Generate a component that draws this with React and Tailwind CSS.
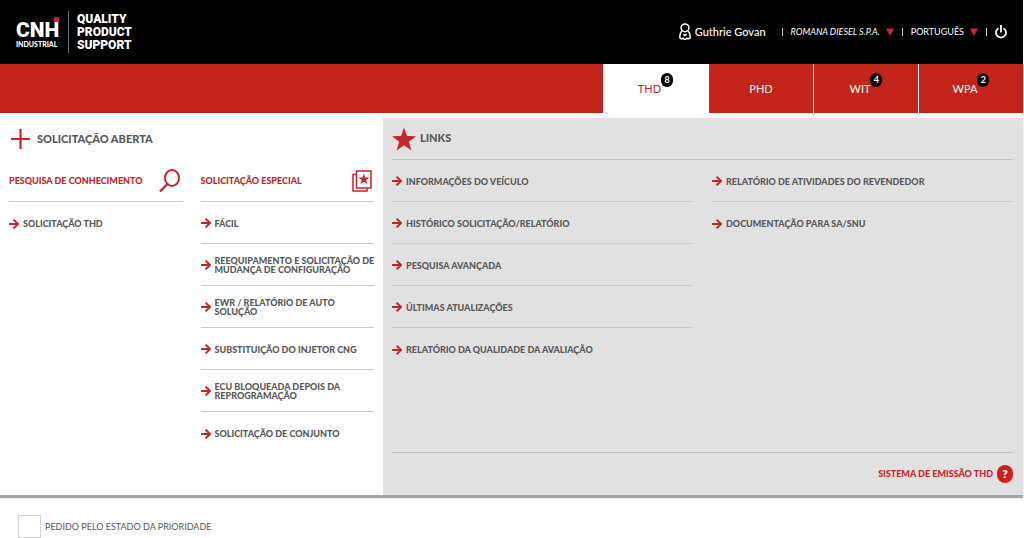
const tabs = [
  { label: "THD", count: 8, active: true },
  { label: "PHD" },
  { label: "WIT", count: 4 },
  { label: "WPA", count: 2 },
];

const specialRequests = [
  "FÁCIL",
  "REEQUIPAMENTO E SOLICITAÇÃO DE\nMUDANÇA DE CONFIGURAÇÃO",
  "EWR / RELATÓRIO DE AUTO\nSOLUÇÃO",
  "SUBSTITUIÇÃO DO INJETOR CNG",
  "ECU BLOQUEADA DEPOIS DA\nREPROGRAMAÇÃO",
  "SOLICITAÇÃO DE CONJUNTO",
];

const mainLinks = [
  "INFORMAÇÕES DO VEÍCULO",
  "HISTÓRICO SOLICITAÇÃO/RELATÓRIO",
  "PESQUISA AVANÇADA",
  "ÚLTIMAS ATUALIZAÇÕES",
  "RELATÓRIO DA QUALIDADE DA AVALIAÇÃO",
];

const reportLinks = [
  "RELATÓRIO DE ATIVIDADES DO REVENDEDOR",
  "DOCUMENTAÇÃO PARA SA/SNU",
];

const starPoints = "12,0 14.9,8.6 24,8.8 16.8,14.3 19.4,23 12,17.8 4.6,23 7.2,14.3 0,8.8 9.1,8.6";

const Stripes = () => (
  <svg className="absolute inset-0 h-full w-full" aria-hidden="true">
    <defs>
      <pattern id="stripes" width="4" height="4" patternUnits="userSpaceOnUse">
        <path d="M-1 1l2-2M0 4l4-4M3 5l2-2" stroke="#a81d14" strokeWidth="1" opacity="0.45" />
      </pattern>
    </defs>
    <rect width="100%" height="100%" fill="url(#stripes)" />
  </svg>
);

const Arrow = () => (
  <svg className="h-3 w-[10px] shrink-0" viewBox="0 0 10 12" fill="none" stroke="#c4252a" strokeWidth="2" aria-hidden="true">
    <path d="M0 6h8.5M4.6 1.6L9 6l-4.4 4.4" />
  </svg>
);

const Triangle = () => (
  <svg className="h-2 w-2" viewBox="0 0 8 8" fill="#cf2231" aria-hidden="true">
    <path d="M0 0.5h8L4 8z" />
  </svg>
);

const Divider = () => <span className="h-2 w-px bg-gray-300" />;

const Logo = () => (
  <a href="#" className="flex items-center text-white">
    <span className="relative flex w-[43px] flex-col pt-1">
      <span className="font-[Roboto,sans-serif] text-[21px] leading-5 font-black">CNH</span>
      <span className="text-[7px] leading-2 font-black">INDUSTRIAL</span>
      <span className="absolute top-px right-0 h-[5px] w-[5px] rounded-[1px] bg-[#c4252a]" />
    </span>
    <span className="mr-2 ml-[9px] h-[42px] w-px bg-gray-500" />
    <span className="font-[Roboto,sans-serif] text-xs leading-[13px] font-black">
      QUALITY
      <br />
      PRODUCT
      <br />
      SUPPORT
    </span>
  </a>
);

const LinkRow = ({ label, last }) => (
  <li className={last ? "h-[42px]" : "h-[42px] border-b border-[#cbcbcb]"}>
    <a href="#" className="flex h-full items-center gap-1 pt-px text-[9px] leading-[9px] font-black text-[#58585a]">
      <Arrow />
      <span className="whitespace-pre">{label}</span>
    </a>
  </li>
);

const LinkList = ({ items }) => (
  <ul>
    {items.map((item, i) => (
      <LinkRow key={item} label={item} last={i === items.length - 1} />
    ))}
  </ul>
);

const Header = () => (
  <header className="flex h-16 items-center justify-between bg-black px-4 text-white">
    <Logo />
    <div className="flex items-center gap-2 text-[9px]">
      <a href="#" className="mr-2 flex items-center gap-1 text-[11px] font-medium">
        <svg className="h-[18px] w-3" viewBox="0 0 12 18" fill="none" stroke="white" strokeWidth="1.5" aria-hidden="true">
          <circle cx="6" cy="4.800" r="3.900" />
          <path d="M3.200 8.200C1.300 9.300.8 11.800.8 14.800c1.200 1.400 2.300 1.300 3.200.4 1.200 1.500 2.800 1.500 4 0 .9.900 2 1 3.200-.4 0-3-.5-5.500-2.400-6.600M4.200 11.200L6 12.600l1.800-1.400" />
        </svg>
        Guthrie Govan
      </a>
      <Divider />
      <button type="button" className="flex items-center gap-[6px] italic">
        ROMANA DIESEL S.P.A.
        <Triangle />
      </button>
      <Divider />
      <button type="button" className="flex items-center gap-[6px]">
        PORTUGUÊS
        <Triangle />
      </button>
      <Divider />
      <button type="button" aria-label="Sair">
        <svg className="h-[14px] w-3" viewBox="0 0 12 14" fill="none" stroke="white" strokeWidth="1.8" aria-hidden="true">
          <path d="M3.500 3.200a5 5 0 1 0 5 0M6 0v7.500" />
        </svg>
      </button>
    </div>
  </header>
);

const Nav = () => (
  <nav className="relative flex h-[49px] justify-end bg-[#c5261b]">
    <Stripes />
    {tabs.map((tab) => (
      <a
        key={tab.label}
        href="#"
        className={
          tab.active
            ? "relative flex w-[105px] items-center justify-center bg-white pt-px text-[11px] text-[#c4252a]"
            : "relative flex w-[105px] items-center justify-center border-l border-white pt-px text-[11px] text-white"
        }
      >
        <span className={tab.count ? "relative mr-3" : "relative"}>
          {tab.label}
          {tab.count && (
            <span className="absolute -top-2 left-full flex h-[14px] w-3 items-center justify-center rounded-full bg-black text-[9px] leading-3 font-bold text-white">
              {tab.count}
            </span>
          )}
        </span>
      </a>
    ))}
  </nav>
);

const OpenRequests = () => (
  <section className="w-[37.44%] px-[9px]">
    <h2 className="flex h-[42px] items-center gap-1 text-[11px] font-black text-[#58585a]">
      <svg className="h-[22px] w-6" viewBox="0 0 24 22" stroke="#c4252a" strokeWidth="2.2" aria-hidden="true">
        <path d="M2 11h19M11.500 1v20" />
      </svg>
      SOLICITAÇÃO ABERTA
    </h2>
    <div className="grid grid-cols-2 gap-x-[18px]">
      <div>
        <h3 className="flex h-[42px] items-center justify-between border-b border-[#cbcbcb] text-[9px] font-black text-[#c4252a]">
          PESQUISA DE CONHECIMENTO
          <svg className="mr-[2px] h-6 w-[22px] shrink-0" viewBox="0 0 22 24" fill="none" stroke="#c4252a" strokeWidth="2" aria-hidden="true">
            <ellipse cx="13" cy="9" rx="7" ry="8" />
            <path d="M8 15.500L1 22.500" strokeWidth="2.400" />
          </svg>
        </h3>
        <LinkList items={["SOLICITAÇÃO THD"]} />
      </div>
      <div>
        <h3 className="flex h-[42px] items-center justify-between border-b border-[#cbcbcb] text-[9px] font-black text-[#c4252a]">
          SOLICITAÇÃO ESPECIAL
          <svg className="mr-[2px] h-[22px] w-5 shrink-0" viewBox="0 0 20 22" fill="none" stroke="#c4252a" strokeWidth="1.500" aria-hidden="true">
            <path d="M4.500 1h14.500v17H4.500zM4 4.500H1V21h14v-2.500" />
            <polygon points={starPoints} transform="translate(6.300 3.500) scale(0.460)" fill="#c4252a" stroke="none" />
          </svg>
        </h3>
        <LinkList items={specialRequests} />
      </div>
    </div>
  </section>
);

const Links = () => (
  <section className="flex flex-1 flex-col bg-[#e1e1e1] pr-[10px] pl-[9px]">
    <h2 className="flex h-[42px] items-center gap-1 border-b border-[#c6c6c6] text-[11px] font-black text-[#58585a]">
      <svg className="h-6 w-6" viewBox="0 0 24 23" fill="#c4252a" aria-hidden="true">
        <polygon points={starPoints} />
      </svg>
      LINKS
    </h2>
    <div className="grid grid-cols-2 gap-x-[19px]">
      <LinkList items={mainLinks} />
      <LinkList items={reportLinks} />
    </div>
    <div className="mt-auto flex h-[43px] items-center justify-end border-t border-[#c6c6c6]">
      <a href="#" className="flex items-center gap-1 text-[9px] font-black text-[#c4252a]">
        SISTEMA DE EMISSÃO THD
        <span className="flex h-[18px] w-4 items-center justify-center rounded-full bg-[#d01f1a] text-xs leading-4 text-white">?</span>
      </a>
    </div>
  </section>
);

export default function App() {
  return (
    <div className="mr-px bg-white font-[Lato,sans-serif]">
      <Header />
      <Nav />
      <main className="pt-[5px]">
        <div className="flex min-h-[377px] shadow-[0_3px_1px_#a5a5a5]">
          <OpenRequests />
          <Links />
        </div>
        <label className="mt-5 ml-[18px] flex items-center gap-1 text-[9px] text-[#58585a]">
          <input type="checkbox" className="h-[23px] w-[23px] appearance-none border border-[#d2d2d2] bg-white" />
          PEDIDO PELO ESTADO DA PRIORIDADE
        </label>
      </main>
    </div>
  );
}
